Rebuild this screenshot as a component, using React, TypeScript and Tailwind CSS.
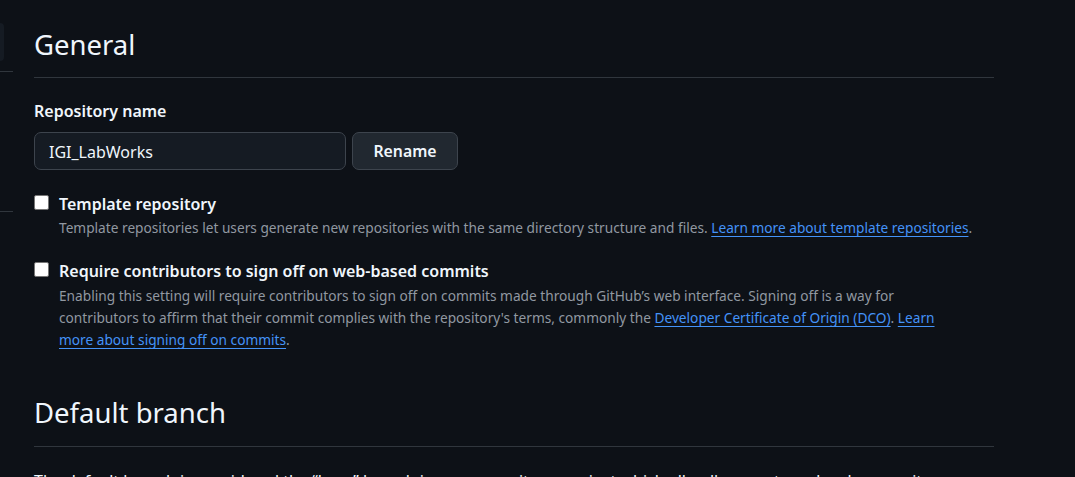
import React from "react";

const font = { fontFamily: '"Noto Sans", "Segoe UI", sans-serif' };

function Checkbox() {
  return (
    <div className="mt-[3px] h-[15px] w-[15px] shrink-0 rounded-[2px] border border-[#767676] bg-white" />
  );
}

function Link({ children }: { children: React.ReactNode }) {
  return (
    <a href="#" className="text-[#4493f8] underline decoration-1 underline-offset-[3px]">
      {children}
    </a>
  );
}

export default function App() {
  return (
    <div
      className="flex h-[477px] w-full overflow-hidden bg-[#0d1117] text-[#f0f6fc] antialiased"
      style={font}
    >
      {/* sidebar remnant */}
      <div className="flex w-[13px] shrink-0 flex-col">
        <div className="mt-[23px] h-[38px] w-[4px] rounded-r-[6px] bg-[#151b23]" />
        <div className="mt-[10px] h-px w-full bg-[#30363d]" />
        <div className="mt-[139px] h-px w-full bg-[#30363d]" />
      </div>

      <div className="ml-[21px] w-[960px] shrink-0">
        {/* General */}
        <div className="mt-[27px] border-b border-[#30363d] pb-[14px]">
          <h2 className="text-[27.5px] font-normal leading-[36px]">General</h2>
        </div>

        <div className="mt-[21px] text-[16px] font-semibold leading-[24px]">Repository name</div>
        <div className="mt-[9px] flex gap-[6px]">
          <div className="flex h-[38px] w-[312px] items-center rounded-[7px] border border-[#3d444d] bg-[#151b23] pl-[14px] pt-[2px] text-[16px]">
            IGI_LabWorks
          </div>
          <button className="flex h-[38px] w-[106px] items-center justify-center rounded-[7px] border border-[#3d444d] bg-[#212830] pt-[2px] text-[15.8px] font-semibold text-[#f0f6fc]">
            Rename
          </button>
        </div>

        {/* Template repository */}
        <div className="mt-[22px] flex">
          <Checkbox />
          <div className="ml-[10px] w-[918px]">
            <div className="text-[16px] font-semibold leading-[24px]">Template repository</div>
            <p className="mt-[1px] text-[13.7px] leading-[22px] text-[#9198a1]">
              Template repositories let users generate new repositories with the same directory structure and files.{" "}
              <Link>Learn more about template repositories</Link>.
            </p>
          </div>
        </div>

        {/* Sign off */}
        <div className="mt-[20px] flex">
          <Checkbox />
          <div className="ml-[10px] w-[905px]">
            <div className="text-[16px] font-semibold leading-[24px]">
              Require contributors to sign off on web-based commits
            </div>
            <p className="mt-[2px] text-[13.7px] leading-[22px] text-[#9198a1]">
              Enabling this setting will require contributors to sign off on commits made through GitHub’s web interface.
              Signing off is a way for contributors to affirm that their commit complies with the repository's terms,
              commonly the <Link>Developer Certificate of Origin (DCO)</Link>.{" "}
              <Link>Learn more about signing off on commits</Link>.
            </p>
          </div>
        </div>

        {/* Default branch */}
        <div className="mt-[44px] border-b border-[#30363d] pb-[15px]">
          <h2 className="text-[27.5px] font-normal leading-[36px]">Default branch</h2>
        </div>
        <p className="mt-[22px] text-[16px] leading-[25px]">
          The default branch is considered the “base” branch in your repository, against which all pull requests and
          code commits are automatically made, unless you specify a different branch.
        </p>
      </div>
    </div>
  );
}
